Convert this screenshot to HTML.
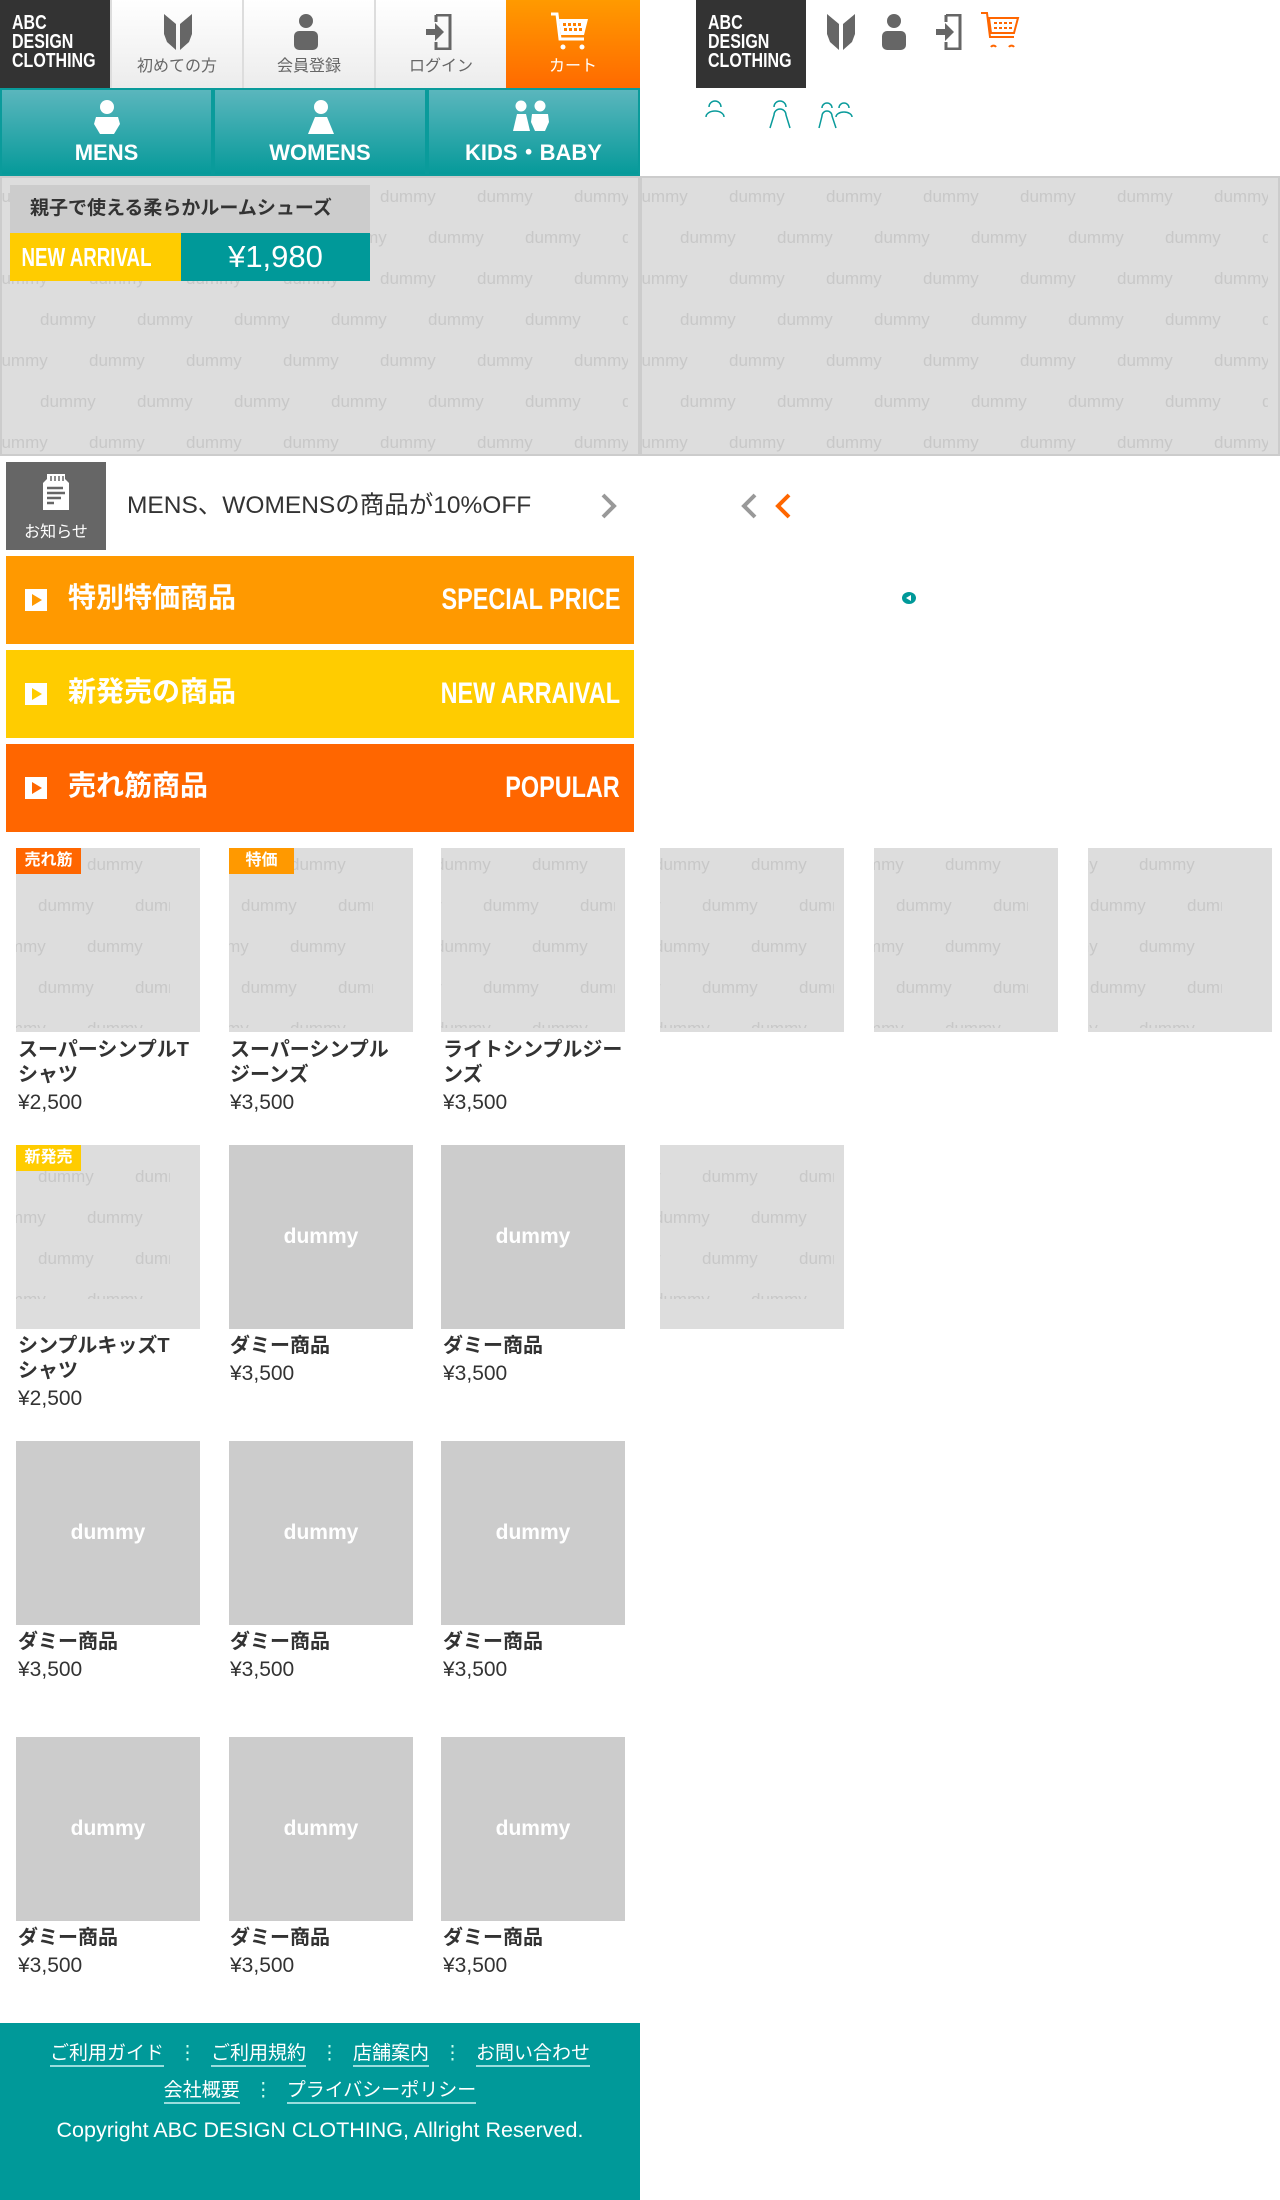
<!DOCTYPE html>
<html><head><meta charset="utf-8">
<style>
*{margin:0;padding:0;box-sizing:border-box}
body{width:1280px;height:2200px;position:relative;background:#fff;font-family:"Liberation Sans","Noto Sans CJK JP",sans-serif;overflow:hidden}
.a{position:absolute}
.logo{position:absolute;top:0;width:110px;height:88px;background:#333;color:#fff;font-weight:bold;font-size:20px;line-height:19px;padding:14px 0 0 12px;white-space:nowrap}
.logo div{transform:scaleX(.8);transform-origin:left}
.tab{position:absolute;top:0;height:88px;background:linear-gradient(#fff,#ececec);border-left:2px solid #ddd;text-align:center;color:#666;font-size:16px}
.tab span{position:absolute;left:0;right:0;top:57px;line-height:20px}
.nav{position:absolute;top:88px;height:88px;background:linear-gradient(#5bb6bd,#069a9a);border:2px solid #0a9b9b;color:#fff;font-weight:bold;font-size:22px;text-align:center}
.nav span{position:absolute;left:0;right:0;top:50px;line-height:26px;white-space:nowrap}
.bn{position:absolute;left:6px;width:628px;height:88px;color:#fff;font-weight:bold}
.bn .pl{position:absolute;left:19px;top:33px;width:22px;height:22px;background:#fff}
.bn .pl:after{content:"";position:absolute;left:7px;top:5px;border-left:10px solid currentColor;border-top:6px solid transparent;border-bottom:6px solid transparent}
.bn .jp{position:absolute;left:62px;top:22px;font-size:28px;line-height:40px}
.bn .en{position:absolute;right:14px;top:24px;font-size:30px;line-height:40px;white-space:nowrap;transform:scaleX(.78);transform-origin:right}
.img{position:absolute;width:184px;height:184px;background:#ddd;overflow:hidden}
.plain{background:#ccc;color:#fff;font-weight:bold;font-size:21px;text-align:center;line-height:184px}
.badge{position:absolute;left:0;top:0;width:65px;height:26px;color:#fff;font-weight:bold;font-size:16px;text-align:center;line-height:26px}
.nm{position:absolute;width:190px;font-size:20px;font-weight:bold;color:#333;line-height:25px;white-space:nowrap}
.pr{font-weight:normal;font-size:21px;line-height:30px}
.ft{position:absolute;left:0;width:640px;text-align:center;color:#fff;font-size:19px;white-space:nowrap}
.ft u{text-decoration:none;border-bottom:2px solid #9dd;padding-bottom:1px}
.ft i{font-style:normal;margin:0 14px;color:#cfe}
</style></head><body>
<svg width="0" height="0" style="position:absolute">
<defs>
<pattern id="dm" width="194" height="82" patternUnits="userSpaceOnUse">
<g font-family="Liberation Sans,sans-serif" font-size="17" fill="#c8c8c8">
<text x="4" y="26">dummy</text><text x="101" y="26">dummy</text>
<text x="-45" y="67">dummy</text><text x="52" y="67">dummy</text><text x="149" y="67">dummy</text>
</g></pattern>
</defs></svg>

<!-- top bar -->
<div class="logo" style="left:0"><div>ABC<br>DESIGN<br>CLOTHING</div></div>
<div class="tab" style="left:110px;width:132px"><svg class="a" style="left:52px;top:14px" width="28" height="36" viewBox="0 0 28 36"><path d="M0 0 L12 10 L12 36 L3 28 L0 20Z M28 0 L16 10 L16 36 L25 28 L28 20Z" fill="#666"/></svg><span>初めての方</span></div>
<div class="tab" style="left:242px;width:132px"><svg class="a" style="left:50px;top:14px" width="24" height="36" viewBox="0 0 24 36"><circle cx="12" cy="7" r="7" fill="#666"/><rect x="0" y="17" width="24" height="19" rx="5" fill="#666"/></svg><span>会員登録</span></div>
<div class="tab" style="left:374px;width:132px"><svg class="a" style="left:50px;top:14px" width="26" height="36" viewBox="0 0 26 36"><path d="M10 1 H24 V35 H10 V28 M10 8 V1" fill="none" stroke="#666" stroke-width="3"/><path d="M0 15 H9 V9 L18 18 L9 27 V21 H0Z" fill="#666"/></svg><span>ログイン</span></div>
<div class="tab" style="left:506px;width:134px;background:linear-gradient(#ff9a00,#ff6a00);border:0;color:#fff"><svg class="a" style="left:44px;top:11px" width="40" height="40" viewBox="0 0 40 40"><path d="M1 3 H7 L10 28 H34" fill="none" stroke="#fff" stroke-width="3"/><path d="M9 8 H38 L34 24 H11Z" fill="#fff"/><g fill="#ff8000"><rect x="13" y="12" width="3" height="3"/><rect x="18" y="12" width="3" height="3"/><rect x="23" y="12" width="3" height="3"/><rect x="28" y="12" width="3" height="3"/><rect x="14" y="17" width="3" height="3"/><rect x="19" y="17" width="3" height="3"/><rect x="24" y="17" width="3" height="3"/><rect x="29" y="17" width="3" height="3"/></g><circle cx="13" cy="36" r="2.5" fill="#fff"/><circle cx="32" cy="36" r="2.5" fill="#fff"/></svg><span>カート</span></div>

<!-- nav -->
<div class="nav" style="left:0;width:213px"><svg class="a" style="left:92px;top:10px" width="26" height="34" viewBox="0 0 26 34"><circle cx="13" cy="7" r="7" fill="#fff"/><path d="M2 17 H24 L26 24 L20 34 H6 L0 24Z" fill="#fff"/></svg><span>MENS</span></div>
<div class="nav" style="left:213px;width:214px"><svg class="a" style="left:93px;top:10px" width="26" height="34" viewBox="0 0 26 34"><circle cx="13" cy="7" r="7" fill="#fff"/><path d="M7 17 H19 L26 34 H0Z" fill="#fff"/></svg><span>WOMENS</span></div>
<div class="nav" style="left:427px;width:213px"><svg class="a" style="left:84px;top:10px" width="36" height="32" viewBox="0 0 36 32"><circle cx="8" cy="6" r="5.5" fill="#fff"/><circle cx="27" cy="6" r="5.5" fill="#fff"/><path d="M4 14 H13 L17 31 H0Z" fill="#fff"/><path d="M19 14 H35 L36 22 L32 31 H22 L18 22Z" fill="#fff"/></svg><span>KIDS・BABY</span></div>

<!-- right top -->
<div class="logo" style="left:696px"><div>ABC<br>DESIGN<br>CLOTHING</div></div>
<svg class="a" style="left:827px;top:14px" width="28" height="36" viewBox="0 0 28 36"><path d="M0 0 L12 10 L12 36 L3 28 L0 20Z M28 0 L16 10 L16 36 L25 28 L28 20Z" fill="#666"/></svg>
<svg class="a" style="left:882px;top:14px" width="24" height="36" viewBox="0 0 24 36"><circle cx="12" cy="7" r="7" fill="#666"/><rect x="0" y="17" width="24" height="19" rx="5" fill="#666"/></svg>
<svg class="a" style="left:936px;top:14px" width="26" height="36" viewBox="0 0 26 36"><path d="M10 1 H24 V35 H10 V28 M10 8 V1" fill="none" stroke="#666" stroke-width="3"/><path d="M0 15 H9 V9 L18 18 L9 27 V21 H0Z" fill="#666"/></svg>
<svg class="a" style="left:980px;top:11px" width="40" height="38" viewBox="0 0 40 38"><path d="M1 2 H7 L10 26 H34 M9 7 H38 L34 22 H11Z" fill="none" stroke="#ff6600" stroke-width="2"/><path d="M14 12 H34 M14 17 H33" stroke="#ff6600" stroke-width="2" stroke-dasharray="3 2"/><path d="M11 36 A3 3 0 0 1 16 36 M29 36 A3 3 0 0 1 34 36" fill="none" stroke="#ff6600" stroke-width="2"/></svg>
<svg class="a" style="left:690px;top:96px" width="220" height="36" viewBox="0 0 220 36"><g fill="none" stroke="#0a9b9b" stroke-width="1.5"><path d="M19 11 A6 6 0 0 1 31 11 M16 21 A9 6 0 0 1 34 21"/><path d="M84 11 A6 6 0 0 1 96 11 M80 32 L84 19 A6 6 0 0 1 96 19 L100 32"/><path d="M132 12 A5 5 0 0 1 142 12 M149 12 A5 5 0 0 1 159 12 M129 32 L132 20 A5 5 0 0 1 142 20 L146 32 M146 21 A8 5 0 0 1 162 21"/></g></svg>

<!-- hero left -->
<div class="a" style="left:0;top:176px;width:640px;height:280px;border:2px solid #ccc;background:#ddd;overflow:hidden">
<svg width="640" height="280" class="a" style="left:-2px;top:-2px"><rect width="640" height="280" fill="url(#dm)" transform="translate(-12,0)"/></svg>
<div class="a" style="left:8px;top:7px;width:360px;height:48px;background:#ccc;color:#333;font-weight:bold;font-size:19px;line-height:48px;padding-left:20px;white-space:nowrap">親子で使える柔らかルームシューズ</div>
<div class="a" style="left:8px;top:55px;width:171px;height:48px;background:#fc0;color:#fff;font-weight:bold;font-size:26px;line-height:48px;white-space:nowrap;overflow:hidden"><div style="transform:scaleX(.72);transform-origin:left;padding-left:16px;width:240px">NEW ARRIVAL</div></div>
<div class="a" style="left:179px;top:55px;width:189px;height:48px;background:#099;color:#fff;font-size:31px;line-height:48px;text-align:center">¥1,980</div>
</div>
<!-- hero right -->
<div class="a" style="left:640px;top:176px;width:640px;height:280px;border:2px solid #ccc;background:#ddd;overflow:hidden">
<svg width="640" height="280" class="a" style="left:-2px;top:-2px"><rect width="640" height="280" fill="url(#dm)" transform="translate(-12,0)"/></svg>
</div>

<!-- notice -->
<div class="a" style="left:6px;top:462px;width:100px;height:88px;background:#666;color:#fff;font-size:16px;text-align:center">
<svg class="a" style="left:36px;top:12px" width="28" height="36" viewBox="0 0 28 36"><path d="M5 0 H23 V5 L27 9 V36 H1 V9 L5 5Z" fill="#fff"/><path d="M9 2 V7 M13 2 V7 M17 2 V7 M21 2 V7" stroke="#666" stroke-width="1.5"/><path d="M5 14 H21 M5 19 H23 M5 24 H19 M5 29 H12" stroke="#666" stroke-width="2.5"/></svg>
<span class="a" style="left:0;right:0;top:56px">お知らせ</span></div>
<div class="a" style="left:127px;top:486px;font-size:24.5px;color:#333;white-space:nowrap">MENS、WOMENSの商品が10%OFF</div>
<svg class="a" style="left:600px;top:492px" width="18" height="28" viewBox="0 0 18 28"><path d="M3 3 L14 14 L3 25" fill="none" stroke="#999" stroke-width="4"/></svg>
<svg class="a" style="left:740px;top:492px" width="18" height="28" viewBox="0 0 18 28"><path d="M15 3 L4 14 L15 25" fill="none" stroke="#999" stroke-width="4"/></svg>
<svg class="a" style="left:774px;top:492px" width="18" height="28" viewBox="0 0 18 28"><path d="M15 3 L4 14 L15 25" fill="none" stroke="#ff6600" stroke-width="4"/></svg>
<svg class="a" style="left:901px;top:590px" width="16" height="16" viewBox="0 0 16 16"><ellipse cx="8" cy="8" rx="7" ry="6" fill="#099"/><path d="M10 5 L5 8 L10 11Z" fill="#fff"/></svg>

<!-- banners -->
<div class="bn" style="top:556px;background:#ff9900;color:#ff9900"><div class="pl"></div><div class="jp" style="color:#fff">特別特価商品</div><div class="en" style="color:#fff">SPECIAL PRICE</div></div>
<div class="bn" style="top:650px;background:#ffcc00;color:#ffcc00"><div class="pl"></div><div class="jp" style="color:#fff">新発売の商品</div><div class="en" style="color:#fff">NEW ARRAIVAL</div></div>
<div class="bn" style="top:744px;background:#ff6600;color:#ff6600"><div class="pl"></div><div class="jp" style="color:#fff">売れ筋商品</div><div class="en" style="color:#fff">POPULAR</div></div>

<!-- products row1 -->
<div class="img" style="left:16px;top:848px"><svg width="184" height="184"><rect width="184" height="184" fill="url(#dm)" transform="translate(-30,-4)"/></svg><div class="badge" style="background:#ff6600">売れ筋</div></div>
<div class="img" style="left:229px;top:848px"><svg width="184" height="184"><rect width="184" height="184" fill="url(#dm)" transform="translate(-40,-4)"/></svg><div class="badge" style="background:#ff9900">特価</div></div>
<div class="img" style="left:441px;top:848px"><svg width="184" height="184"><rect width="184" height="184" fill="url(#dm)" transform="translate(-10,-4)"/></svg></div>
<div class="nm" style="left:18px;top:1038px">スーパーシンプルT<br>シャツ<div class="pr">¥2,500</div></div>
<div class="nm" style="left:230px;top:1038px">スーパーシンプル<br>ジーンズ<div class="pr">¥3,500</div></div>
<div class="nm" style="left:443px;top:1038px">ライトシンプルジー<br>ンズ<div class="pr">¥3,500</div></div>
<div class="img" style="left:660px;top:848px"><svg width="184" height="184"><rect width="184" height="184" fill="url(#dm)" transform="translate(-10,-4)"/></svg></div>
<div class="img" style="left:874px;top:848px"><svg width="184" height="184"><rect width="184" height="184" fill="url(#dm)" transform="translate(-30,-4)"/></svg></div>
<div class="img" style="left:1088px;top:848px"><svg width="184" height="184"><rect width="184" height="184" fill="url(#dm)" transform="translate(-50,-4)"/></svg></div>

<!-- row2 -->
<div class="img" style="left:16px;top:1145px"><svg width="184" height="184"><rect width="184" height="184" fill="url(#dm)" transform="translate(-30,-30)"/></svg><div class="badge" style="background:#ffcc00">新発売</div></div>
<div class="img plain" style="left:229px;top:1145px">dummy</div>
<div class="img plain" style="left:441px;top:1145px">dummy</div>
<div class="img" style="left:660px;top:1145px"><svg width="184" height="184"><rect width="184" height="184" fill="url(#dm)" transform="translate(-10,-30)"/></svg></div>
<div class="nm" style="left:18px;top:1334px">シンプルキッズT<br>シャツ<div class="pr">¥2,500</div></div>
<div class="nm" style="left:230px;top:1334px">ダミー商品<div class="pr">¥3,500</div></div>
<div class="nm" style="left:443px;top:1334px">ダミー商品<div class="pr">¥3,500</div></div>

<!-- row3 -->
<div class="img plain" style="left:16px;top:1441px">dummy</div>
<div class="img plain" style="left:229px;top:1441px">dummy</div>
<div class="img plain" style="left:441px;top:1441px">dummy</div>
<div class="nm" style="left:18px;top:1630px">ダミー商品<div class="pr">¥3,500</div></div>
<div class="nm" style="left:230px;top:1630px">ダミー商品<div class="pr">¥3,500</div></div>
<div class="nm" style="left:443px;top:1630px">ダミー商品<div class="pr">¥3,500</div></div>

<!-- row4 -->
<div class="img plain" style="left:16px;top:1737px">dummy</div>
<div class="img plain" style="left:229px;top:1737px">dummy</div>
<div class="img plain" style="left:441px;top:1737px">dummy</div>
<div class="nm" style="left:18px;top:1926px">ダミー商品<div class="pr">¥3,500</div></div>
<div class="nm" style="left:230px;top:1926px">ダミー商品<div class="pr">¥3,500</div></div>
<div class="nm" style="left:443px;top:1926px">ダミー商品<div class="pr">¥3,500</div></div>

<!-- footer -->
<div class="a" style="left:0;top:2023px;width:640px;height:177px;background:#009999"></div>
<div class="ft" style="top:2038px"><u>ご利用ガイド</u><i>⋮</i><u>ご利用規約</u><i>⋮</i><u>店舗案内</u><i>⋮</i><u>お問い合わせ</u></div>
<div class="ft" style="top:2075px"><u>会社概要</u><i>⋮</i><u>プライバシーポリシー</u></div>
<div class="ft" style="top:2118px;font-size:21.5px">Copyright ABC DESIGN CLOTHING, Allright Reserved.</div>
</body></html>
